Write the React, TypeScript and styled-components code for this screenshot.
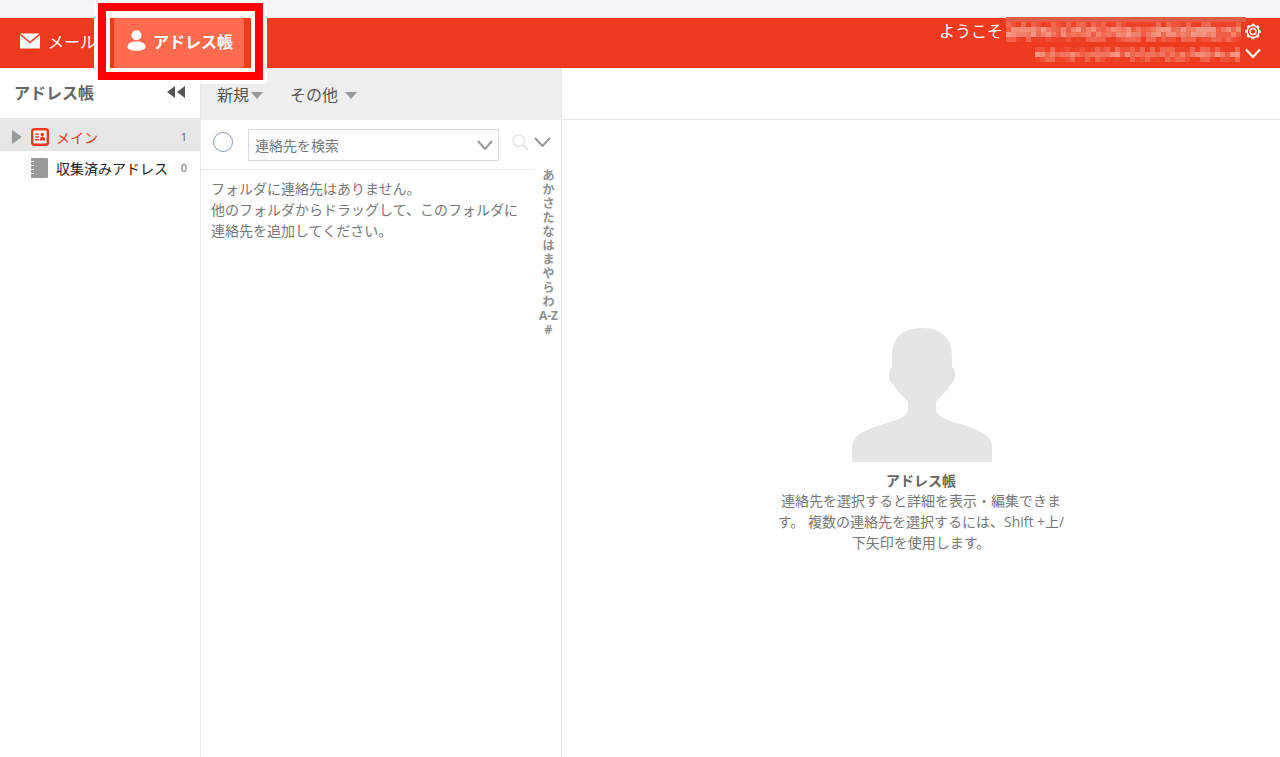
import React from 'react';
import styled, { createGlobalStyle } from 'styled-components';

const GlobalStyle = createGlobalStyle`
  html, body { margin: 0; padding: 0; height: 100%; background: #fff; overflow: hidden; }
  body { font-family: "Open Sans", "Noto Sans CJK JP", sans-serif; color: #666; }
  #root { height: 100%; }
  * { box-sizing: border-box; }
`;

const Page = styled.div`
  height: 757px;
  position: relative;
  display: flex;
  flex-direction: column;
`;

const TopStrip = styled.div`
  height: 18px;
  background: #f3f4f6;
`;

const Header = styled.header`
  height: 50px;
  background: #ee3a1e;
  display: flex;
  align-items: center;
  color: #fff;
`;

const HeaderTab = styled.div<{ $active?: boolean }>`
  height: 50px;
  display: flex;
  align-items: center;
  gap: ${(p) => (p.$active ? '7px' : '8px')};
  font-size: 16px;
  color: #fff;
  font-weight: ${(p) => (p.$active ? 700 : 400)};
  background: ${(p) => (p.$active ? '#ff6b4e' : 'transparent')};
  border-radius: ${(p) => (p.$active ? '3px' : '0')};
  padding: ${(p) => (p.$active ? '0 10px 5px 13px' : '0 0 5px 20px')};
  width: ${(p) => (p.$active ? '130px' : '114px')};
  flex: none;
`;

const UserArea = styled.div`
  margin-left: auto;
  height: 50px;
  width: 341px;
  padding-right: 19px;
  display: grid;
  grid-template-columns: auto 1fr auto;
  grid-template-rows: 27px 16px;
  align-content: start;
  align-items: center;
  font-size: 16px;
`;

const Welcome = styled.span`
  line-height: 24px;
  margin-top: -2px;
`;

const Blurred = styled.svg<{ $second?: boolean }>`
  display: block;
  justify-self: end;
  align-self: start;
  overflow: visible;
  shape-rendering: crispEdges;
  margin-top: ${(p) => (p.$second ? '2px' : '-1px')};
`;

const HeaderIcon = styled.svg`
  display: block;
  margin-left: 5px;
`;

const Body = styled.main`
  flex: 1;
  display: flex;
  min-height: 0;
`;

const Sidebar = styled.aside`
  width: 201px;
  flex: none;
  border-right: 1px solid #e8e8e8;
`;

const SidebarHead = styled.div`
  height: 52px;
  padding: 0 15px 3px 14px;
  display: flex;
  align-items: center;
  justify-content: space-between;
  border-bottom: 2px solid #e6e8ec;
  font-size: 16px;
  font-weight: 700;
  color: #666;
`;

const FolderRow = styled.div<{ $active?: boolean }>`
  height: ${(p) => (p.$active ? '31px' : '32px')};
  display: grid;
  grid-template-columns: 31px 25px 1fr auto;
  align-items: center;
  padding-right: 13px;
  padding-top: ${(p) => (p.$active ? '2px' : '1px')};
  background: ${(p) => (p.$active ? '#e6e6e6' : 'transparent')};
  color: ${(p) => (p.$active ? '#ee3a1e' : '#222')};
  font-size: 14px;
`;

const Caret = styled.span`
  margin-left: 12px;
  width: 0;
  height: 0;
  border-top: 7px solid transparent;
  border-bottom: 7px solid transparent;
  border-left: 10px solid #999;
`;

const Count = styled.span<{ $active?: boolean }>`
  font-size: 11px;
  color: ${(p) => (p.$active ? '#5f4f78' : '#666')};
`;

const ListColumn = styled.section`
  width: 361px;
  flex: none;
  display: flex;
  flex-direction: column;
  border-right: 1px solid #e8e8e8;
`;

const Toolbar = styled.div`
  height: 52px;
  flex: none;
  background: #eeeeee;
  display: flex;
  align-items: center;
  padding-left: 16px;
  font-size: 16px;
  color: #555;
`;

const ToolButton = styled.span<{ $gap: number; $last?: boolean }>`
  display: flex;
  align-items: center;
  gap: ${(p) => p.$gap}px;
  margin-right: ${(p) => (p.$last ? '0' : '27px')};

  &::after {
    content: '';
    border-left: 6px solid transparent;
    border-right: 6px solid transparent;
    border-top: 7px solid #999;
    margin-top: 2px;
  }
`;

const SearchRow = styled.div`
  height: 50px;
  flex: none;
  display: flex;
  align-items: center;
  padding: 0 2px 0 12px;
  border-bottom: 1px solid #e8e8e8;
  margin-right: 27px;
`;

const RadioCircle = styled.span`
  width: 20px;
  height: 20px;
  border-radius: 50%;
  border: 1.5px solid #8c9bb0;
  flex: none;
  margin-right: 15px;
  margin-top: -6px;
`;

const SearchBox = styled.div`
  width: 251px;
  height: 32px;
  flex: none;
  margin-top: 1px;
  border: 1px solid #ddd;
  display: flex;
  align-items: center;
  justify-content: space-between;
  padding: 0 5px 0 6px;
  font-size: 14px;
  color: #777;
`;

const SearchTools = styled.div`
  flex: none;
  display: flex;
  align-items: center;
  gap: 5px;
  margin-left: 13px;
  margin-top: -5px;
`;

const ListBody = styled.div`
  flex: 1;
  display: flex;
  min-height: 0;
`;

const EmptyNote = styled.p`
  margin: 0;
  padding: 8px 8px 0 10px;
  width: 333px;
  font-size: 14px;
  line-height: 21px;
  color: #777;
`;

const IndexBar = styled.div`
  width: 27px;
  flex: none;
  margin-top: -1px;
  padding-left: 2px;
  display: flex;
  flex-direction: column;
  align-items: center;
  font-size: 12px;
  font-weight: 700;
  line-height: 14px;
  color: #8f8f8f;
`;

const Detail = styled.section`
  flex: 1;
  display: flex;
  flex-direction: column;
`;

const DetailTop = styled.div`
  height: 52px;
  flex: none;
  border-bottom: 1px solid #e8e8e8;
`;

const Placeholder = styled.div`
  flex: 1;
  display: flex;
  flex-direction: column;
  align-items: center;
  padding-top: 207px;
`;

const PlaceholderTitle = styled.div`
  margin-top: 9px;
  font-size: 14px;
  line-height: 20px;
  font-weight: 700;
  color: #666;
`;

const PlaceholderText = styled.div`
  width: 290px;
  margin-top: -1px;
  font-size: 14px;
  line-height: 21px;
  color: #777;
  text-align: center;
`;

const Callout = styled.div`
  position: absolute;
  left: 94px;
  top: 0;
  width: 173px;
  height: 84px;
  border-radius: 4px;
  background: #fff;
  padding: 3px 4px 4px;
`;

const CalloutRed = styled.div`
  height: 77px;
  background: #fe0000;
  padding: 8px;
`;

const CalloutInner = styled.div`
  height: 61px;
  background: #fff;
  padding: 7px 4px 0;
`;

const CalloutFill = styled.div`
  height: 50px;
  background: #ee3a1e;
  padding-left: 4px;
`;

// 文字を隠したモザイク部分
const mosaic = (width: number, rows: number, seed: number, top: number) => {
  const cells = [];
  const strong = ['#f2806b', '#f06a52', '#f59684', '#f37560', '#ef5d44', '#f48d78'];
  const weak = ['#ef5238', '#f06a52', '#ee4429', '#f2634a', '#ee3f24'];
  for (let y = 0; y < rows; y++) {
    const palette = y === 0 || y === rows - 1 ? weak : strong;
    for (let x = 0; x < width / 5; x++) {
      const hash = Math.abs(Math.sin(x * 12.9898 + y * 78.233 + seed) * 43758.5453);
      const n = Math.floor((hash % 1) * palette.length);
      cells.push(<rect key={`${x}-${y}`} x={x * 5} y={top + y * 5} width={5} height={5} fill={palette[n]} />);
    }
  }
  return cells;
};

const Mail = () => (
  <svg width="20" height="16" viewBox="0 0 21 16">
    <path fill="#fff" d="M1 0h19a1 1 0 0 1 .6.2L10.500 8.600.4.2A1 1 0 0 1 1 0zM0 1.800l10.500 8.800L21 1.800V15a1 1 0 0 1-1 1H1a1 1 0 0 1-1-1z" />
  </svg>
);

const Person = () => (
  <svg width="19" height="21" viewBox="0 0 18 21">
    <circle cx="9" cy="5.200" r="5" fill="#fff" />
    <path fill="#fff" d="M0 17c0-3.800 4-5.500 9-5.500s9 1.700 9 5.500c0 2.600-4 3.800-9 3.800S0 19.600 0 17z" />
  </svg>
);

const Gear = () => (
  <HeaderIcon width="16" height="17" viewBox="0 0 16 17">
    <circle cx="8" cy="8.500" r="5.900" fill="none" stroke="#fff" strokeWidth="1.500" />
    <circle cx="8" cy="8.500" r="7.100" fill="none" stroke="#fff" strokeWidth="1.500" strokeDasharray="3 2.580" strokeDashoffset="1.500" />
    <circle cx="8" cy="8.500" r="3" fill="none" stroke="#fff" strokeWidth="1.400" />
  </HeaderIcon>
);

const Chevron = ({ w, h, color, sw }: { w: number; h: number; color: string; sw: number }) => (
  <svg width={w} height={h} viewBox={`0 0 ${w} ${h}`}>
    <path fill="none" stroke={color} strokeWidth={sw} d={`M1 1L${w / 2} ${h - 1}L${w - 1} 1`} />
  </svg>
);

const CollapseArrows = () => (
  <svg width="18" height="12" viewBox="0 0 18 12">
    <path fill="#555" d="M8 0v12L0 6zM18 0v12l-8-6z" />
  </svg>
);

const ContactCard = () => (
  <svg width="18" height="18" viewBox="0 0 18 18">
    <rect x="1.200" y="1.200" width="15.600" height="15.600" rx="2" fill="#fff" stroke="#ee3a1e" strokeWidth="2.400" />
    <path fill="#ee3a1e" d="M4 5.500h4v1.300H4zM4 8.300h4v1.300H4zM4 11.100h4v1.300H4z" />
    <circle cx="11.300" cy="6.600" r="1.800" fill="#ee3a1e" />
    <path fill="#ee3a1e" d="M9 11c0-1.500 1-2.200 2.300-2.200h.4c1.300 0 2.300.7 2.300 2.200v1.400H9z" />
  </svg>
);

const Notebook = () => (
  <svg width="18" height="20" viewBox="0 0 18 20">
    <rect width="17" height="20" rx="1" fill="#999" />
    <path fill="none" stroke="#fff" strokeWidth="1.200" d="M0 3.500h3M0 7.500h3M0 11.500h3M0 15.500h3" />
  </svg>
);

const Magnifier = () => (
  <svg width="17" height="17" viewBox="0 0 19 19">
    <circle cx="7.500" cy="7.500" r="6.500" fill="none" stroke="#e4e4e4" strokeWidth="1.500" />
    <path stroke="#d8d8d8" strokeWidth="1.500" d="M12.500 12.500l5.500 5.500" />
  </svg>
);

const Silhouette = () => (
  <svg width="142" height="135" viewBox="-1 0 142 135">
    <path
      fill="#e6e5e6"
      d="M71 1C92 1 101 12 101 30V40C103 41 104 44 104 48C104 53 102 56 99 58C97 63 90 69 85 75V81C85 88 91 92 106 96C120 100 132 105 137 110C140 113 141 116 141 120V135H1V120C1 116 2 113 5 110C10 105 22 100 36 96C51 92 57 88 57 81V75C52 69 45 63 43 58C40 56 38 53 38 48C38 44 39 41 41 40V30C41 12 50 1 71 1Z"
    />
  </svg>
);

const indexLabels = ['あ', 'か', 'さ', 'た', 'な', 'は', 'ま', 'や', 'ら', 'わ', 'A-Z', '#'];

export default function App() {
  return (
    <Page>
      <GlobalStyle />
      <TopStrip />
      <Header>
        <HeaderTab>
          <Mail />
          メール
        </HeaderTab>
        <UserArea>
          <Welcome>ようこそ</Welcome>
          <Blurred width="234" height="23" viewBox="0 0 234 23">
            <rect width="240" height="5" fill="#e25c46" />
            {mosaic(234, 4, 3, 5)}
          </Blurred>
          <Gear />
          <span />
          <Blurred $second width="205" height="15" viewBox="0 0 205 15">{mosaic(205, 3, 5, 0)}</Blurred>
          <HeaderIcon width="16" height="11" viewBox="0 0 16 11">
            <path fill="none" stroke="#fff" strokeWidth="2.200" d="M1 1.500l7 7.500 7-7.500" />
          </HeaderIcon>
        </UserArea>
      </Header>
      <Body>
        <Sidebar>
          <SidebarHead>
            アドレス帳
            <CollapseArrows />
          </SidebarHead>
          <FolderRow $active>
            <Caret />
            <ContactCard />
            メイン
            <Count $active>1</Count>
          </FolderRow>
          <FolderRow>
            <span />
            <Notebook />
            収集済みアドレス
            <Count>0</Count>
          </FolderRow>
        </Sidebar>
        <ListColumn>
          <Toolbar>
            <ToolButton $gap={2}>新規</ToolButton>
            <ToolButton $gap={7} $last>その他</ToolButton>
          </Toolbar>
          <SearchRow>
            <RadioCircle />
            <SearchBox>
              連絡先を検索
              <Chevron w={16} h={10} color="#999" sw={2} />
            </SearchBox>
            <SearchTools>
              <Magnifier />
              <Chevron w={17} h={10} color="#999" sw={2} />
            </SearchTools>
          </SearchRow>
          <ListBody>
            <EmptyNote>
              フォルダに連絡先はありません。
              <br />
              他のフォルダからドラッグして、このフォルダに
              <br />
              連絡先を追加してください。
            </EmptyNote>
            <IndexBar>
              {indexLabels.map((label) => (
                <span key={label}>{label}</span>
              ))}
            </IndexBar>
          </ListBody>
        </ListColumn>
        <Detail>
          <DetailTop />
          <Placeholder>
            <Silhouette />
            <PlaceholderTitle>アドレス帳</PlaceholderTitle>
            <PlaceholderText>
              連絡先を選択すると詳細を表示・編集できます。 複数の連絡先を選択するには、Shift +上/下矢印を使用します。
            </PlaceholderText>
          </Placeholder>
        </Detail>
      </Body>
      <Callout>
        <CalloutRed>
          <CalloutInner>
            <CalloutFill>
              <HeaderTab $active>
                <Person />
                アドレス帳
              </HeaderTab>
            </CalloutFill>
          </CalloutInner>
        </CalloutRed>
      </Callout>
    </Page>
  );
}
